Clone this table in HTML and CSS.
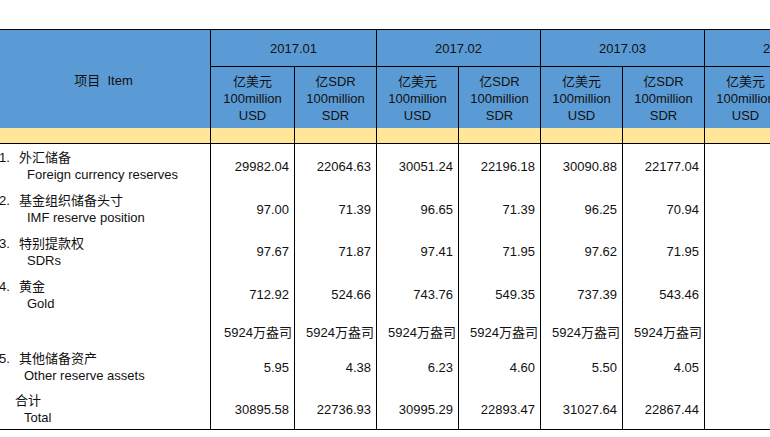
FILE: index.html
```html
<!DOCTYPE html>
<html lang="zh">
<head>
<meta charset="utf-8">
<title>官方储备资产</title>
<link rel="stylesheet" href="styles.css">
</head>
<body>
<div class="page">
<table class="reserve">
  <colgroup>
    <col class="c-item">
    <col class="c-first">
    <col class="c-val"><col class="c-val"><col class="c-val">
    <col class="c-val"><col class="c-val"><col class="c-val"><col class="c-val">
  </colgroup>
  <thead>
    <tr class="r-month">
      <th rowspan="2" class="item-head">项目&nbsp;&nbsp;Item</th>
      <th colspan="2">2017.01</th>
      <th colspan="2">2017.02</th>
      <th colspan="2">2017.03</th>
      <th colspan="2">2017.04</th>
    </tr>
    <tr class="r-unit">
      <th>亿美元<br>100million<br>USD</th>
      <th>亿SDR<br>100million<br>SDR</th>
      <th>亿美元<br>100million<br>USD</th>
      <th>亿SDR<br>100million<br>SDR</th>
      <th>亿美元<br>100million<br>USD</th>
      <th>亿SDR<br>100million<br>SDR</th>
      <th>亿美元<br>100million<br>USD</th>
      <th>亿SDR<br>100million<br>SDR</th>
    </tr>
    <tr class="r-band">
      <td></td><td></td><td></td><td></td><td></td><td></td><td></td><td></td><td></td>
    </tr>
  </thead>
  <tbody>
    <tr class="h43">
      <td class="item"><span class="zh"><span class="no">1.&nbsp;&nbsp;</span>外汇储备</span><span class="en in-28">Foreign currency reserves</span></td>
      <td class="num">29982.04</td><td class="num">22064.63</td>
      <td class="num">30051.24</td><td class="num">22196.18</td>
      <td class="num">30090.88</td><td class="num">22177.04</td>
      <td class="num"></td><td class="num"></td>
    </tr>
    <tr class="h43">
      <td class="item"><span class="zh"><span class="no">2.&nbsp;&nbsp;</span>基金组织储备头寸</span><span class="en in-28">IMF reserve position</span></td>
      <td class="num">97.00</td><td class="num">71.39</td>
      <td class="num">96.65</td><td class="num">71.39</td>
      <td class="num">96.25</td><td class="num">70.94</td>
      <td class="num"></td><td class="num"></td>
    </tr>
    <tr class="h42">
      <td class="item"><span class="zh"><span class="no">3.&nbsp;&nbsp;</span>特别提款权</span><span class="en in-28">SDRs</span></td>
      <td class="num">97.67</td><td class="num">71.87</td>
      <td class="num">97.41</td><td class="num">71.95</td>
      <td class="num">97.62</td><td class="num">71.95</td>
      <td class="num"></td><td class="num"></td>
    </tr>
    <tr class="h44">
      <td class="item"><span class="zh"><span class="no">4.&nbsp;&nbsp;</span>黄金</span><span class="en in-28">Gold</span></td>
      <td class="num">712.92</td><td class="num">524.66</td>
      <td class="num">743.76</td><td class="num">549.35</td>
      <td class="num">737.39</td><td class="num">543.46</td>
      <td class="num"></td><td class="num"></td>
    </tr>
    <tr class="h29 oz">
      <td class="item"></td>
      <td class="num">5924万盎司</td><td class="num">5924万盎司</td>
      <td class="num">5924万盎司</td><td class="num">5924万盎司</td>
      <td class="num">5924万盎司</td><td class="num">5924万盎司</td>
      <td class="num"></td><td class="num"></td>
    </tr>
    <tr class="h43">
      <td class="item"><span class="zh"><span class="no">5.&nbsp;&nbsp;</span>其他储备资产</span><span class="en in-25">Other reserve assets</span></td>
      <td class="num">5.95</td><td class="num">4.38</td>
      <td class="num">6.23</td><td class="num">4.60</td>
      <td class="num">5.50</td><td class="num">4.05</td>
      <td class="num"></td><td class="num"></td>
    </tr>
    <tr class="h42">
      <td class="item"><span class="zh in-16">合计</span><span class="en in-25">Total</span></td>
      <td class="num">30895.58</td><td class="num">22736.93</td>
      <td class="num">30995.29</td><td class="num">22893.47</td>
      <td class="num">31027.64</td><td class="num">22867.44</td>
      <td class="num"></td><td class="num"></td>
    </tr>
  </tbody>
</table>
</div>
</body>
</html>
```
FILE: styles.css
```css
html, body {
  margin: 0;
  padding: 0;
  background: #ffffff;
  overflow: hidden;
}

.page {
  padding-top: 29px;
  width: 770px;
  height: 408px;
  overflow: hidden;
}

.reserve {
  margin-left: -4px;
  border-collapse: collapse;
  table-layout: fixed;
  width: 872px;
  font-family: "Liberation Sans", "Noto Sans CJK SC", sans-serif;
  font-size: 13px;
  color: #111111;
}

.c-item { width: 214px; }
.c-first { width: 84px; }
.c-val { width: 82px; }

.reserve th,
.reserve td {
  padding: 0;
  border-left: 1px solid #000;
  border-right: 1px solid #000;
  font-weight: normal;
  vertical-align: middle;
}

.reserve thead th {
  background: #5b9bd5;
  text-align: center;
  line-height: 17px;
}

.r-month { height: 37px; }
.r-month th {
  border-top: 1px solid #000;
  border-bottom: 1px solid #000;
}
.reserve .r-month th.item-head {
  border-bottom: none;
  padding-top: 3px;
}

.r-unit { height: 61px; }
.reserve .r-unit th { padding-top: 2px; }

.r-band { height: 16px; }
.r-band td {
  background: #ffe699;
  border-bottom: 1px solid #000;
}

.h43 { height: 43px; }
.h42 { height: 42px; }
.h44 { height: 44px; }
.h29 { height: 29px; }

.reserve tbody td { padding-top: 2px; }

.reserve tbody tr:last-child td {
  border-bottom: 1px solid #000;
}

.reserve tbody td.item {
  padding-left: 2px;
  line-height: 17px;
}

.item > span { display: block; white-space: nowrap; }
.no { margin-right: 2px; }
.in-28 { padding-left: 28px; }
.in-25 { padding-left: 25px; }
.in-16 { padding-left: 16px; }

.reserve tbody td.num {
  text-align: right;
  padding-right: 5px;
  white-space: nowrap;
}

.reserve tbody .oz td.num { padding-right: 2px; }
```
